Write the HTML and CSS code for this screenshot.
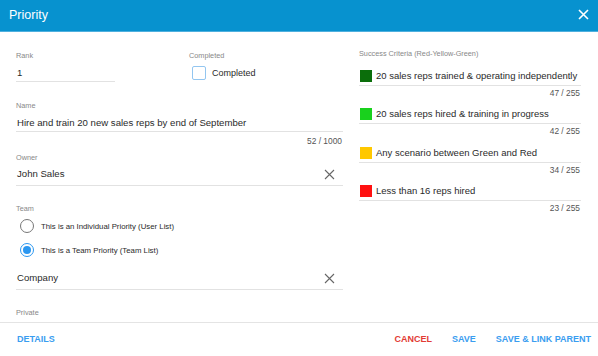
FILE: index.html
```html
<!DOCTYPE html>
<html lang="en">
  <head>
    <title>Priority</title>
    <meta charset="UTF-8" />
    <meta name="viewport" content="width=device-width" />
    <link rel="stylesheet" href="styles.css">
  </head>
  <body>
    <div class="dialog">
      <header class="dialog-header">
        <h1>Priority</h1>
        <button class="close-btn" aria-label="Close">
          <svg width="11" height="11" viewBox="0 0 11 11"><path d="M1 1L10 10M10 1L1 10" stroke="#fff" stroke-width="1.6" fill="none"/></svg>
        </button>
      </header>

      <div class="dialog-body">
        <div class="col-left">
          <div class="row-top">
            <div class="field rank">
              <div class="field-label">Rank</div>
              <div class="input">1</div>
            </div>
            <div class="field completed">
              <div class="field-label">Completed</div>
              <label class="checkbox"><span class="box"></span>Completed</label>
            </div>
          </div>

          <div class="field name">
            <div class="field-label">Name</div>
            <div class="input">Hire and train 20 new sales reps by end of September</div>
            <div class="counter">52 / 1000</div>
          </div>

          <div class="field owner">
            <div class="field-label">Owner</div>
            <div class="input with-clear">
              <span>John Sales</span>
              <svg class="clear" width="11" height="11" viewBox="0 0 11 11"><path d="M1 1L10 10M10 1L1 10" stroke="#666" stroke-width="1.1" fill="none"/></svg>
            </div>
          </div>

          <div class="field team">
            <div class="field-label">Team</div>
            <label class="radio"><span class="dot"></span>This is an Individual Priority (User List)</label>
            <label class="radio checked"><span class="dot"></span>This is a Team Priority (Team List)</label>
            <div class="input with-clear company">
              <span>Company</span>
              <svg class="clear" width="11" height="11" viewBox="0 0 11 11"><path d="M1 1L10 10M10 1L1 10" stroke="#666" stroke-width="1.1" fill="none"/></svg>
            </div>
          </div>

          <div class="field private">
            <div class="field-label">Private</div>
          </div>
        </div>

        <div class="col-right">
          <div class="field-label">Success Criteria (Red-Yellow-Green)</div>
          <div class="criteria">
            <div class="criteria-row"><span class="swatch" style="background:#0b6e0b"></span>20 sales reps trained &amp; operating independently</div>
            <div class="counter">47 / 255</div>
          </div>
          <div class="criteria">
            <div class="criteria-row"><span class="swatch" style="background:#19d11d"></span>20 sales reps hired &amp; training in progress</div>
            <div class="counter">42 / 255</div>
          </div>
          <div class="criteria">
            <div class="criteria-row"><span class="swatch" style="background:#ffc800"></span>Any scenario between Green and Red</div>
            <div class="counter">34 / 255</div>
          </div>
          <div class="criteria">
            <div class="criteria-row"><span class="swatch" style="background:#ff1111"></span>Less than 16 reps hired</div>
            <div class="counter">23 / 255</div>
          </div>
        </div>
      </div>

      <footer class="dialog-footer">
        <button class="btn">DETAILS</button>
        <div class="actions">
          <button class="btn danger">CANCEL</button>
          <button class="btn">SAVE</button>
          <button class="btn">SAVE &amp; LINK PARENT</button>
        </div>
      </footer>
    </div>
  </body>
</html>
```

FILE: styles.css
```css
* {
  box-sizing: border-box;
}

body {
  margin: 0;
  font-family: "Liberation Sans", Arial, sans-serif;
  color: #2a2a2a;
  background-color: white;
}

.dialog {
  width: 598px;
  height: 356px;
  display: flex;
  flex-direction: column;
  overflow: hidden;
}

.dialog-header {
  height: 32px;
  flex: none;
  background-color: #0792cf;
  border-bottom: 1px solid #4fb0de;
  display: flex;
  align-items: center;
  justify-content: space-between;
  padding: 0 9px 2px 9px;
}

.dialog-header h1 {
  margin: 0;
  font-size: 12.5px;
  font-weight: normal;
  color: white;
}

.close-btn {
  border: none;
  background: none;
  padding: 0;
  display: flex;
}

.dialog-body {
  height: 290px;
  flex: none;
  overflow: hidden;
  display: grid;
  grid-template-columns: 327px 222px;
  column-gap: 16px;
  padding: 16px 17px 0 16px;
}

.field-label {
  font-size: 7.3px;
  line-height: 10px;
  color: #888;
}

.input {
  margin-top: 1px;
  padding: 3px 0 0 1px;
  font-size: 9.6px;
  line-height: 16px;
  color: #2a2a2a;
  border-bottom: 1px solid #e2e2e2;
}

.counter {
  font-size: 8.4px;
  line-height: 12px;
  color: #555;
  text-align: right;
  margin-top: 3px;
  padding-right: 1px;
}

.col-left {
  padding-top: 3px;
}

.row-top {
  display: flex;
}

.rank {
  width: 99px;
}

.completed {
  margin-left: 74px;
}

.checkbox {
  display: flex;
  align-items: center;
  gap: 6px;
  font-size: 9px;
  margin-top: 2px;
  padding-left: 3px;
  height: 19px;
}

.box {
  width: 14px;
  height: 14px;
  border: 1px solid #93c6f0;
  border-radius: 2px;
}

.name {
  margin-top: 19px;
}

.owner {
  margin-top: 6px;
}

.with-clear {
  display: flex;
  align-items: center;
  justify-content: space-between;
  line-height: 18px;
  padding: 1px 8px 2px 1px;
}

.team {
  margin-top: 18px;
}

.radio {
  display: flex;
  align-items: center;
  gap: 7px;
  height: 24px;
  font-size: 7.8px;
  padding-left: 4px;
}

.dot {
  width: 14px;
  height: 14px;
  border-radius: 50%;
  border: 1px solid #777;
  display: flex;
  align-items: center;
  justify-content: center;
}

.radio.checked .dot {
  border-color: #2b97f0;
}

.radio.checked .dot::after {
  content: "";
  width: 8px;
  height: 8px;
  border-radius: 50%;
  background: #2b97f0;
}

.company {
  margin-top: 6px;
}

.private {
  margin-top: 18px;
}

.col-right {
  padding-top: 1px;
}

.criteria:first-of-type {
  margin-top: 6px;
}

.criteria {
  margin-top: 7.6px;
}

.criteria-row {
  display: flex;
  align-items: center;
  gap: 4px;
  font-size: 9.5px;
  line-height: 16px;
  padding: 1px 0 1px 1px;
  border-bottom: 1px solid #e2e2e2;
}

.swatch {
  width: 12px;
  height: 12px;
  flex: none;
}

.criteria .counter {
  margin-top: 2px;
  line-height: 10px;
}

.dialog-footer {
  flex: 1;
  border-top: 1px solid #e4e4e4;
  display: flex;
  align-items: center;
  justify-content: space-between;
  padding: 0 7px 2px 17px;
}

.actions {
  display: flex;
  gap: 20px;
}

.btn {
  border: none;
  background: none;
  padding: 0;
  font-family: inherit;
  font-size: 9px;
  font-weight: bold;
  color: #3a9df0;
}

.btn.danger {
  color: #e23b35;
}
```
